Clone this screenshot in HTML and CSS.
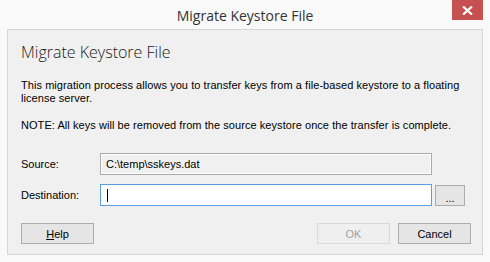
FILE: index.html
```html
<!DOCTYPE html>
<html lang="en">
<head>
    <meta charset="UTF-8">
    <title>Migrate Keystore File</title>
    <link rel="stylesheet" href="styles.css">
</head>
<body>

<div class="window">
    <div class="titlebar">
        <span class="title">Migrate Keystore File</span>
        <div class="close-btn">
            <svg width="11" height="9" viewBox="0 0 11 9"><path d="M1 0.5 L10 8.5 M10 0.5 L1 8.5" stroke="#fff" stroke-width="2.2"/></svg>
        </div>
    </div>

    <div class="panel">
        <h1 class="heading">Migrate Keystore File</h1>
        <p class="info">This migration process allows you to transfer keys from a file-based keystore to a floating license server.</p>
        <p class="info note">NOTE: All keys will be removed from the source keystore once the transfer is complete.</p>

        <div class="field-row">
            <label class="field-label">Source:</label>
            <div class="textbox readonly">C:\temp\sskeys.dat</div>
        </div>
        <div class="field-row dest-row">
            <label class="field-label">Destination:</label>
            <div class="textbox focused"><span class="caret"></span></div>
            <button class="btn browse-btn">...</button>
        </div>

        <div class="button-row">
            <button class="btn"><u>H</u>elp</button>
            <div class="spacer"></div>
            <button class="btn disabled">OK</button>
            <button class="btn">Cancel</button>
        </div>
    </div>
</div>

</body>
</html>
```

FILE: styles.css
```css
body { margin: 0; background: #f9f9f9; font-family: 'Liberation Sans', Arial, sans-serif; }
.window { width: 490px; height: 262px; background: #f9f9f9; box-sizing: border-box; }
.titlebar { position: relative; height: 29px; text-align: center; }
.title { display: inline-block; margin-top: 6px; font-family: 'Open Sans', sans-serif; font-size: 14px; color: #333; }
.close-btn { position: absolute; top: 0; right: 7px; width: 31px; height: 20px; background: #c75050; display: flex; align-items: center; justify-content: center; }
.panel { margin: 0 7px; height: 226px; box-sizing: border-box; border: 1px solid #d6d6d6; background: #f0f0f0; padding: 12px 10px 0 13px; }
.heading { margin: 0; font-family: 'Open Sans', sans-serif; font-weight: 300; font-size: 16px; line-height: 20px; color: #1a1a1a; }
.info { margin: 17px 0 0 0; font-size: 11px; line-height: 13px; color: #000; letter-spacing: 0.06px; }
.info.note { margin-top: 14px; }
.field-row { display: flex; align-items: center; height: 22px; margin-top: 21px; }
.dest-row { margin-top: 9px; }
.field-label { width: 79px; font-size: 11px; color: #000; }
.textbox { width: 332px; height: 22px; box-sizing: border-box; border: 1px solid #a9a9a9; font-size: 11px; padding: 0 5px; display: flex; align-items: center; background: #fff; }
.textbox.readonly { background: #f0f0f0; box-shadow: inset 0 0 0 1px #fff; }
.textbox.focused { border-color: #5a9ee6; }
.caret { display: block; width: 1px; height: 13px; background: #000; margin-left: 1px; }
.btn { height: 21px; width: 73px; box-sizing: border-box; border: 1px solid #adadad; background: #e5e5e5; font-family: 'Liberation Sans', Arial, sans-serif; font-size: 11px; color: #000; padding: 0; }
.browse-btn { width: 30px; margin-left: 3px; margin-top: 1px; padding-top: 4px; }
.btn.disabled { border-color: #d9d9d9; background: #efefef; color: #a3a3a3; }
.button-row { display: flex; gap: 8px; margin-top: 17px; padding-right: 1px; }
.spacer { flex: 1; }
```
